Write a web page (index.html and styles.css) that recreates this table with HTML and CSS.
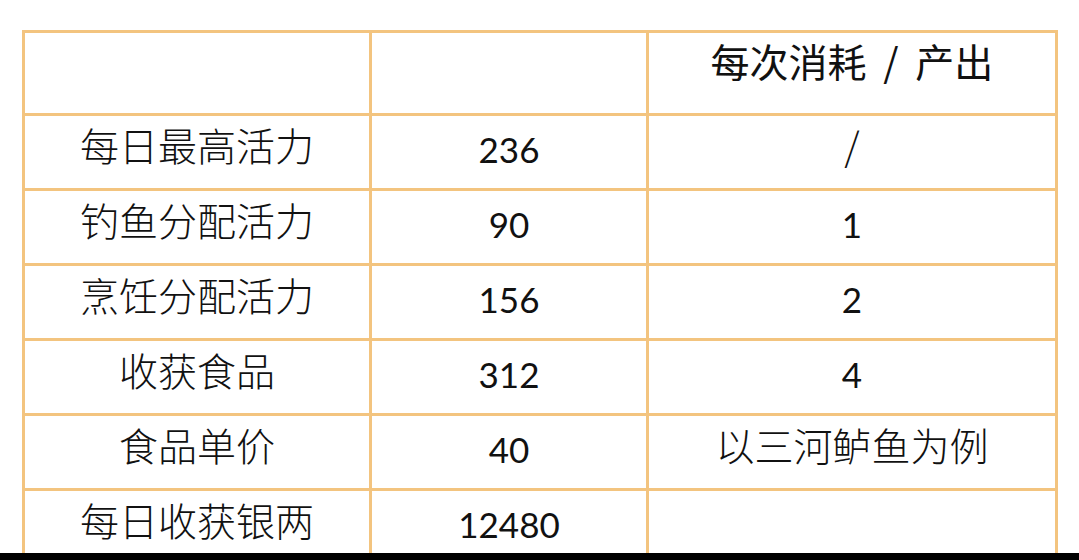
FILE: index.html
```html
<!DOCTYPE html>
<html lang="zh-CN">
<head>
<meta charset="utf-8">
<title>活力收益表</title>
<link rel="stylesheet" href="styles.css">
</head>
<body>
<div class="page">
  <div class="sheet">
    <table class="grid">
      <tr class="head">
        <td class="c1"></td>
        <td class="c2"></td>
        <td class="c3 cjk">每次消耗 / 产出</td>
      </tr>
      <tr>
        <td class="c1 cjk">每日最高活力</td>
        <td class="c2 num">236</td>
        <td class="c3 cjk">/</td>
      </tr>
      <tr>
        <td class="c1 cjk">钓鱼分配活力</td>
        <td class="c2 num">90</td>
        <td class="c3 num">1</td>
      </tr>
      <tr>
        <td class="c1 cjk">烹饪分配活力</td>
        <td class="c2 num">156</td>
        <td class="c3 num">2</td>
      </tr>
      <tr>
        <td class="c1 cjk">收获食品</td>
        <td class="c2 num">312</td>
        <td class="c3 num">4</td>
      </tr>
      <tr>
        <td class="c1 cjk">食品单价</td>
        <td class="c2 num">40</td>
        <td class="c3 cjk">以三河鲈鱼为例</td>
      </tr>
      <tr>
        <td class="c1 cjk">每日收获银两</td>
        <td class="c2 num">12480</td>
        <td class="c3"></td>
      </tr>
    </table>
  </div>
  <div class="bar"></div>
</div>
</body>
</html>
```
FILE: styles.css
```css
html, body {
  margin: 0;
  padding: 0;
  background: #ffffff;
}

.page {
  width: 1079px;
  height: 560px;
  display: flex;
  flex-direction: column;
  overflow: hidden;
}

.sheet {
  height: 553px;
  flex: none;
  overflow: hidden;
  padding: 30px 0 0 22px;
  box-sizing: border-box;
}

.bar {
  flex: 1;
  background: #000000;
}

.grid {
  border-collapse: separate;
  border-spacing: 0;
  border-top: 3px solid #f3c47f;
  border-left: 3px solid #f3c47f;
  table-layout: fixed;
  width: 1036px;
  color: #111111;
}

.grid td {
  box-sizing: border-box;
  height: 75px;
  padding: 0;
  border-right: 3px solid #f3c47f;
  border-bottom: 3px solid #f3c47f;
  text-align: center;
  vertical-align: middle;
}

.grid .head td {
  height: 83px;
}

.c1 { width: 347px; }
.c2 { width: 277px; }
.c3 { width: 409px; }

.grid .cjk {
  font-family: "Noto Sans CJK SC", "Noto Sans", sans-serif;
  font-weight: 300;
  font-size: 39px;
  line-height: 1;
  padding-bottom: 16px;
}

.grid .head .cjk {
  font-weight: 400;
  word-spacing: 8px;
  padding-bottom: 26px;
}

.grid .num {
  font-family: Lato, "Open Sans", sans-serif;
  font-size: 35px;
  line-height: 1;
  padding-bottom: 6px;
}
```
